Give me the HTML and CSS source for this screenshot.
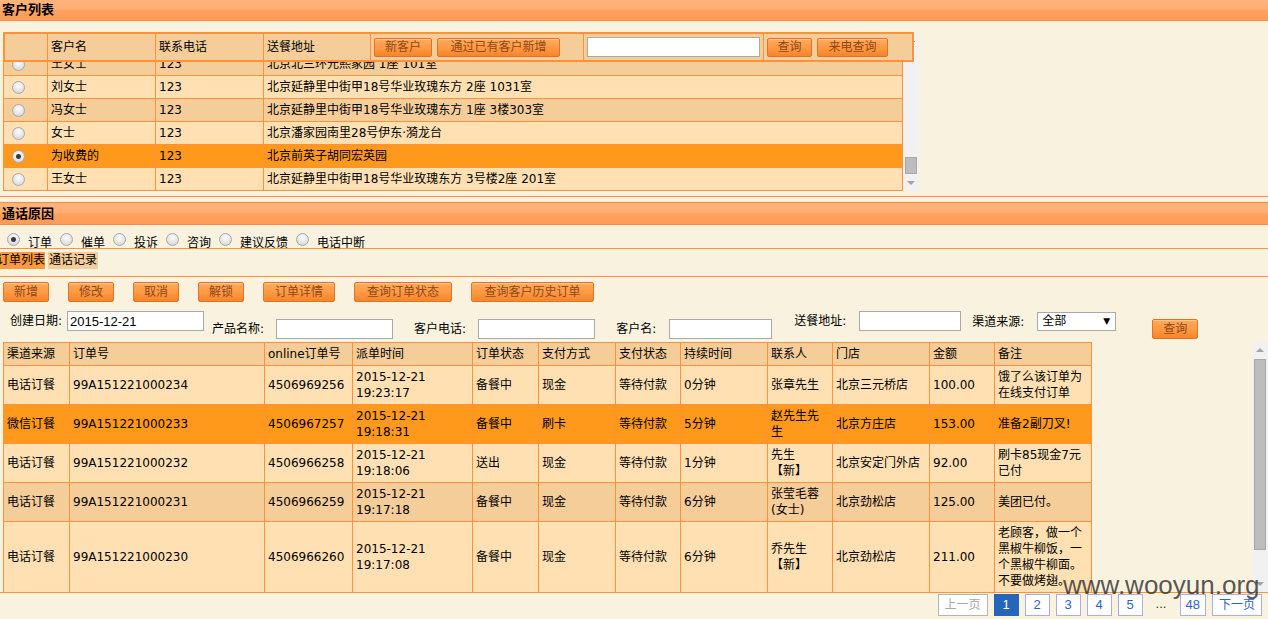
FILE: index.html
```html
<!DOCTYPE html>
<html lang="zh-CN">
<head>
<meta charset="utf-8">
<title>客户列表</title>
<link rel="stylesheet" href="styles.css">
</head>
<body>
<div class="bar bar-top">客户列表</div>
<section class="cust">
  <div class="custbox">
    <div class="custscroll">
      <div class="custview">
        <table class="ctable">
          <colgroup><col class="cc-r"><col class="cc-n"><col class="cc-p"><col></colgroup>
          <tr class="alt"><td class="rcell"><input type="radio" name="cust" class="rd"></td><td>王女士</td><td>123</td><td>北京北三环元熙家园 1座 101室</td></tr>
          <tr><td class="rcell"><input type="radio" name="cust" class="rd"></td><td>刘女士</td><td>123</td><td>北京延静里中街甲18号华业玫瑰东方 2座 1031室</td></tr>
          <tr class="alt"><td class="rcell"><input type="radio" name="cust" class="rd"></td><td>冯女士</td><td>123</td><td>北京延静里中街甲18号华业玫瑰东方 1座 3楼303室</td></tr>
          <tr><td class="rcell"><input type="radio" name="cust" class="rd"></td><td>女士</td><td>123</td><td>北京潘家园南里28号伊东·漪龙台</td></tr>
          <tr class="sel"><td class="rcell"><input type="radio" name="cust" class="rd" checked></td><td>为收费的</td><td>123</td><td>北京前英子胡同宏英园</td></tr>
          <tr><td class="rcell"><input type="radio" name="cust" class="rd"></td><td>王女士</td><td>123</td><td>北京延静里中街甲18号华业玫瑰东方 3号楼2座 201室</td></tr>
        </table>
      </div>
      <div class="vbar vbar-cust">
        <span class="arr arr-up"></span>
        <span class="thumb thumb-cust"></span>
        <span class="arr arr-down"></span>
      </div>
    </div>
    <div class="custhead">
      <div class="hc hc-r"></div>
      <div class="hc hc-n">客户名</div>
      <div class="hc hc-p">联系电话</div>
      <div class="hc hc-a">送餐地址</div>
      <div class="hc hc-b"><button class="btn btn-sm w58">新客户</button><button class="btn btn-sm w123">通过已有客户新增</button></div>
      <div class="hc hc-i"><input class="txt w173" type="text"></div>
      <div class="hc hc-q"><button class="btn btn-sm w45">查询</button><button class="btn btn-sm w71">来电查询</button></div>
    </div>
  </div>
</section>

<div class="bar bar-mid">通话原因</div>
<div class="reasons">
  <label class="rl"><input type="radio" name="reason" class="rd" checked><span>订单</span></label>
  <label class="rl"><input type="radio" name="reason" class="rd"><span>催单</span></label>
  <label class="rl"><input type="radio" name="reason" class="rd"><span>投诉</span></label>
  <label class="rl"><input type="radio" name="reason" class="rd"><span>咨询</span></label>
  <label class="rl"><input type="radio" name="reason" class="rd"><span>建议反馈</span></label>
  <label class="rl"><input type="radio" name="reason" class="rd"><span>电话中断</span></label>
</div>
<div class="tabs">
  <span class="tab tab-on">订单列表</span>
  <span class="tab">通话记录</span>
</div>

<section class="orders">
  <div class="toolbar">
    <button class="btn w46">新增</button>
    <button class="btn w46">修改</button>
    <button class="btn w46">取消</button>
    <button class="btn w46">解锁</button>
    <button class="btn w72">订单详情</button>
    <button class="btn w98">查询订单状态</button>
    <button class="btn w123">查询客户历史订单</button>
  </div>
  <div class="filters">
    <label class="f f1"><span>创建日期:</span><input class="txt txt-date w137" type="text" value="2015-12-21"></label>
    <label class="f f2"><span>产品名称:</span><input class="txt w117" type="text"></label>
    <label class="f f3"><span>客户电话:</span><input class="txt w117" type="text"></label>
    <label class="f f4"><span>客户名:</span><input class="txt w103" type="text"></label>
    <label class="f f5"><span>送餐地址:</span><input class="txt w102" type="text"></label>
    <label class="f f6"><span>渠道来源:</span><span class="select">全部<i class="caret">▼</i></span></label>
    <button class="btn f7 w46">查询</button>
  </div>
  <div class="gridwrap">
    <div class="gridview">
      <table class="otable">
        <colgroup>
          <col class="o1"><col class="o2"><col class="o3"><col class="o4"><col class="o5"><col class="o6">
          <col class="o7"><col class="o8"><col class="o9"><col class="o10"><col class="o11"><col class="o12">
        </colgroup>
        <tr class="head">
          <td>渠道来源</td><td>订单号</td><td>online订单号</td><td>派单时间</td><td>订单状态</td><td>支付方式</td><td>支付状态</td><td>持续时间</td><td>联系人</td><td>门店</td><td>金额</td><td>备注</td>
        </tr>
        <tr>
          <td>电话订餐</td><td>99A151221000234</td><td>4506969256</td><td>2015-12-21 19:23:17</td><td>备餐中</td><td>现金</td><td>等待付款</td><td>0分钟</td><td>张章先生</td><td>北京三元桥店</td><td>100.00</td><td>饿了么该订单为在线支付订单</td>
        </tr>
        <tr class="sel">
          <td>微信订餐</td><td>99A151221000233</td><td>4506967257</td><td>2015-12-21 19:18:31</td><td>备餐中</td><td>刷卡</td><td>等待付款</td><td>5分钟</td><td>赵先生先生</td><td>北京方庄店</td><td>153.00</td><td>准备2副刀叉!</td>
        </tr>
        <tr>
          <td>电话订餐</td><td>99A151221000232</td><td>4506966258</td><td>2015-12-21 19:18:06</td><td>送出</td><td>现金</td><td>等待付款</td><td>1分钟</td><td>先生【新】</td><td>北京安定门外店</td><td>92.00</td><td>刷卡85现金7元已付</td>
        </tr>
        <tr class="alt">
          <td>电话订餐</td><td>99A151221000231</td><td>4506966259</td><td>2015-12-21 19:17:18</td><td>备餐中</td><td>现金</td><td>等待付款</td><td>6分钟</td><td>张莹毛蓉(女士)</td><td>北京劲松店</td><td>125.00</td><td>美团已付。</td>
        </tr>
        <tr>
          <td>电话订餐</td><td>99A151221000230</td><td>4506966260</td><td>2015-12-21 19:17:08</td><td>备餐中</td><td>现金</td><td>等待付款</td><td>6分钟</td><td>乔先生【新】</td><td>北京劲松店</td><td>211.00</td><td>老顾客，做一个黑椒牛柳饭，一个黑椒牛柳面。不要做烤翅。</td>
        </tr>
      </table>
    </div>
    <div class="vbar vbar-main">
      <span class="arr arr-up"></span>
      <span class="thumb thumb-main"></span>
      <span class="arr arr-down"></span>
    </div>
  </div>
</section>

<nav class="pager">
  <span class="pg pg-off">上一页</span>
  <span class="pg pg-cur">1</span>
  <span class="pg">2</span>
  <span class="pg">3</span>
  <span class="pg">4</span>
  <span class="pg">5</span>
  <span class="pg pg-dots">...</span>
  <span class="pg">48</span>
  <span class="pg pg-txt">下一页</span>
</nav>

<div class="wm">www.wooyun.org</div>
</body>
</html>
```

FILE: styles.css
```css
* { box-sizing: border-box; }
html, body { margin: 0; padding: 0; }
body {
  position: relative;
  width: 1268px;
  height: 619px;
  overflow: hidden;
  background: #f9f2de;
  color: #000;
  font: 12px/16px "DejaVu Sans", "Noto Sans CJK SC", sans-serif;
  text-spacing-trim: space-all;
}

/* section bars */
.bar {
  font-weight: bold;
  font-size: 13px;
  padding-left: 2px;
  background: linear-gradient(#ffb37d 0%, #ffae73 45%, #ffa15f 52%, #ff9c56 100%);
  border-bottom: 1px solid #ff8e3e;
}
.bar-top { height: 21px; line-height: 20px; }
.bar-mid {
  height: 23px;
  line-height: 21px;
  margin-top: 5px;
  border-top: 1px solid #ff8a36;
}

/* customer list */
.cust {
  padding: 11px 0 5px;
  border-bottom: 1px solid #ff913c;
}
.custbox {
  position: relative;
  margin-left: 3px;
  width: 916px;
  height: 159px;
}
.custscroll { display: flex; height: 159px; }
.custview {
  width: 900px;
  height: 159px;
  overflow: hidden;
  padding-top: 20px;
}
.ctable, .otable {
  border-collapse: collapse;
  table-layout: fixed;
}
.ctable { width: 900px; }
.cc-r { width: 44px; }
.cc-n { width: 108px; }
.cc-p { width: 108px; }
.ctable td {
  border: 1px solid #ff913c;
  background: #ffe0b3;
  padding: 3px 3px;
  line-height: 16px;
  height: 23px;
  white-space: nowrap;
  overflow: hidden;
}
.ctable tr.alt td { background: #f5cd99; }
.ctable tr.sel td { background: #ff991c; }
.ctable td.rcell { padding-left: 8px; }

.vbar {
  width: 16px;
  background: #f1f1f1;
  display: flex;
  flex-direction: column;
  align-items: center;
}
.arr {
  flex: none;
  width: 16px;
  height: 16px;
  display: flex;
  align-items: center;
  justify-content: center;
}
.arr::before {
  content: "";
  border-left: 4px solid transparent;
  border-right: 4px solid transparent;
}
.arr-up::before { border-bottom: 4px solid #a3a3a3; }
.arr-down::before { border-top: 4px solid #a3a3a3; }
.vbar-cust .arr-up::before { border-bottom-color: #555; }
.thumb {
  flex: none;
  width: 12px;
  background: #bdbdbd;
  border: 1px solid #a8a8a8;
}
.thumb-cust { height: 17px; margin-top: auto; }
.vbar-cust .arr-down { height: 17px; }

.custhead {
  position: absolute;
  top: 0;
  left: 0;
  width: 911px;
  height: 30px;
  display: flex;
  background: #f5cd99;
  border: 2px solid #ff913c;
}
.hc {
  display: flex;
  align-items: center;
  height: 26px;
  border-left: 1px solid #ff913c;
  padding-left: 3px;
  gap: 5px;
}
.hc-r { width: 42px; border-left: 0; }
.hc-n { width: 108px; }
.hc-p { width: 108px; }
.hc-a { width: 107px; }
.hc-b { width: 213px; }
.hc-i { width: 180px; }
.hc-q { width: 148px; }

/* buttons */
.btn {
  flex: none;
  height: 20px;
  padding: 0;
  margin: 0;
  border: 1px solid #e0732a;
  border-radius: 2px;
  background: linear-gradient(#ffab5e 0%, #ff9a44 50%, #f6842a 100%);
  box-shadow: inset 0 1px 0 rgba(255, 220, 180, .6);
  color: #8e4818;
  font: 12px/18px "DejaVu Sans", "Noto Sans CJK SC", sans-serif;
  text-align: center;
}
.btn-sm { height: 19px; line-height: 17px; }
.w45 { width: 45px; }
.w46 { width: 46px; }
.w58 { width: 58px; }
.w71 { width: 71px; }
.w72 { width: 72px; }
.w98 { width: 98px; }
.w123 { width: 123px; }

/* text inputs */
.txt {
  flex: none;
  height: 20px;
  margin: 0;
  padding: 0 2px;
  border: 1px solid #a9a9a9;
  background: #fff;
  font: 13px/18px "Liberation Sans", Arial, sans-serif;
  color: #000;
}
.w102 { width: 102px; }
.w103 { width: 103px; }
.w117 { width: 117px; }
.w137 { width: 137px; }
.w173 { width: 173px; }

/* radios */
.rd {
  appearance: none;
  -webkit-appearance: none;
  flex: none;
  width: 13px;
  height: 13px;
  margin: 0;
  border-radius: 50%;
  border: 1px solid #a9a9a9;
  background: radial-gradient(circle at 50% 35%, #ffffff 0%, #e9e9e9 45%, #cfcfcf 100%);
  vertical-align: middle;
}
.rd:checked {
  background:
    radial-gradient(circle, #3a3a3a 0 2px, rgba(0,0,0,0) 3px),
    radial-gradient(circle at 50% 35%, #ffffff 0%, #e9e9e9 45%, #cfcfcf 100%);
}

.reasons {
  display: flex;
  align-items: flex-start;
  height: 24px;
  padding: 8px 0 0 7px;
  border-bottom: 1px solid #ff913c;
}
.rl {
  display: flex;
  align-items: flex-start;
  gap: 8px;
  margin-right: 8px;
  line-height: 16px;
}
.rl span { margin-top: 2px; }

.tabs {
  display: flex;
  height: 28px;
  padding-top: 3px;
  border-bottom: 1px solid #ff913c;
  overflow: hidden;
}
.tab {
  height: 17px;
  line-height: 17px;
  padding: 0 1px;
  background: #f5cd99;
  margin-left: 3px;
}
.tab-on {
  background: #ff9a3c;
  margin-left: -3px;
  padding: 0;
}

/* orders */
.toolbar {
  display: flex;
  gap: 19px;
  padding: 5px 0 0 3px;
}
.filters {
  display: flex;
  align-items: flex-start;
  height: 40px;
}
.f {
  display: flex;
  align-items: center;
  gap: 12px;
  white-space: nowrap;
}
.f1 { margin: 9px 0 0 10px; gap: 5px; }
.f2 { margin: 17px 0 0 8px; }
.f3 { margin: 17px 0 0 21px; }
.f4 { margin: 17px 0 0 21px; gap: 13px; }
.f5 { margin: 9px 0 0 22px; gap: 13px; }
.f6 { margin: 10px 0 0 11px; gap: 13px; }
.f7 { margin: 17px 0 0 36px; }
.select {
  position: relative;
  width: 79px;
  height: 19px;
  border: 1px solid #a9a9a9;
  background: #fff;
  padding-left: 4px;
  line-height: 17px;
  font-size: 12px;
}
.caret {
  position: absolute;
  right: 5px;
  top: 0;
  font-style: normal;
  font-size: 9px;
}

.gridwrap {
  display: flex;
  height: 251px;
  border-bottom: 1px solid #ff913c;
}
.gridview {
  flex: 1;
  overflow: hidden;
  padding-left: 3px;
}
.otable { width: 1089px; }
.o1 { width: 66px; }
.o2 { width: 195px; }
.o3 { width: 88px; }
.o4 { width: 120px; }
.o5 { width: 66px; }
.o6 { width: 77px; }
.o7 { width: 65px; }
.o8 { width: 87px; }
.o9 { width: 65px; }
.o10 { width: 97px; }
.o11 { width: 65px; }
.o12 { width: 97px; }
.otable td {
  border: 1px solid #ff913c;
  background: #ffe0b3;
  padding: 3px 3px;
  line-height: 16px;
  vertical-align: middle;
}
.otable tr.head td, .otable tr.alt td { background: #f5cd99; }
.otable tr.sel td { background: #ff991c; }

.vbar-main { width: 16px; }
.thumb-main { height: 191px; margin-top: 1px; }
.vbar-main .arr-down { margin-top: auto; }

/* pager */
.pager {
  display: flex;
  justify-content: flex-end;
  gap: 6px;
  padding-right: 6px;
  margin-top: 1px;
}
.pg {
  min-width: 25px;
  height: 22px;
  padding: 0 5px;
  border: 1px solid #a7aef0;
  color: #2a62c6;
  background: #fff;
  text-align: center;
  line-height: 20px;
  font-family: "Liberation Sans", "Noto Sans CJK SC", sans-serif;
  font-size: 13px;
}
.pg-off, .pg-txt { font-size: 12px; padding: 0 6px; }
.pg-off { color: #a8a8a8; border-color: #b4b4b4; }
.pg-cur { background: #2765bb; color: #fff; border-color: #2765bb; }
.pg-dots { border: 0; background: transparent; color: #333; }

.wm {
  position: absolute;
  left: 1063px;
  top: 572px;
  font: 26px/26px "Liberation Sans", Arial, sans-serif;
  color: rgba(50, 50, 50, .82);
  pointer-events: none;
}
```
